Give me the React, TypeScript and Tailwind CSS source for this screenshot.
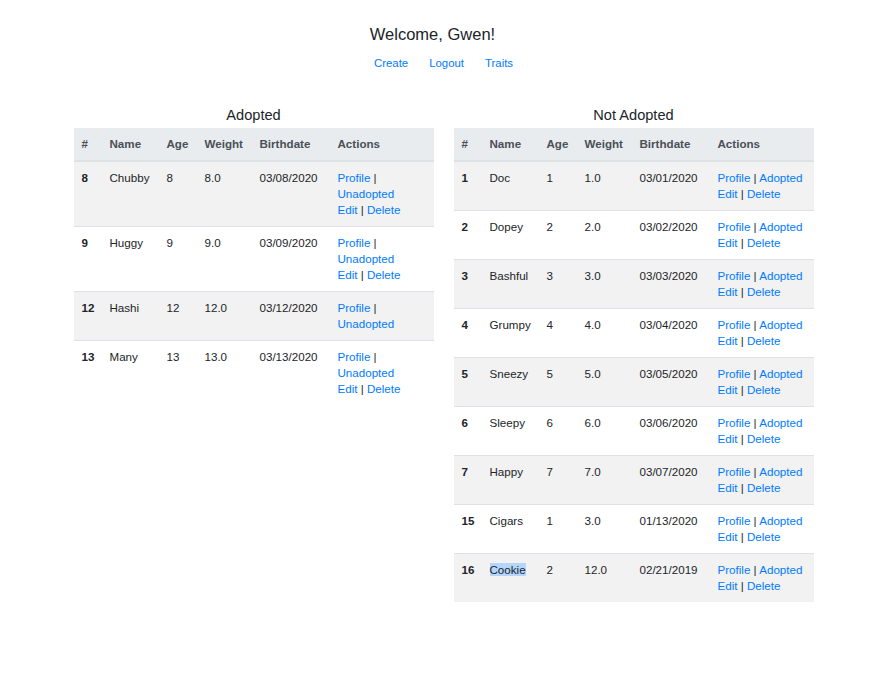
import React from "react";

type Pet = { id: number; name: string; age: number; weight: string; birth: string; canEdit: boolean; selected?: boolean };

const adopted: Pet[] = [
  { id: 8, name: "Chubby", age: 8, weight: "8.0", birth: "03/08/2020", canEdit: true },
  { id: 9, name: "Huggy", age: 9, weight: "9.0", birth: "03/09/2020", canEdit: true },
  { id: 12, name: "Hashi", age: 12, weight: "12.0", birth: "03/12/2020", canEdit: false },
  { id: 13, name: "Many", age: 13, weight: "13.0", birth: "03/13/2020", canEdit: true },
];

const notAdopted: Pet[] = [
  { id: 1, name: "Doc", age: 1, weight: "1.0", birth: "03/01/2020", canEdit: true },
  { id: 2, name: "Dopey", age: 2, weight: "2.0", birth: "03/02/2020", canEdit: true },
  { id: 3, name: "Bashful", age: 3, weight: "3.0", birth: "03/03/2020", canEdit: true },
  { id: 4, name: "Grumpy", age: 4, weight: "4.0", birth: "03/04/2020", canEdit: true },
  { id: 5, name: "Sneezy", age: 5, weight: "5.0", birth: "03/05/2020", canEdit: true },
  { id: 6, name: "Sleepy", age: 6, weight: "6.0", birth: "03/06/2020", canEdit: true },
  { id: 7, name: "Happy", age: 7, weight: "7.0", birth: "03/07/2020", canEdit: true },
  { id: 15, name: "Cigars", age: 1, weight: "3.0", birth: "01/13/2020", canEdit: true },
  { id: 16, name: "Cookie", age: 2, weight: "12.0", birth: "02/21/2019", canEdit: true, selected: true },
];

const A = ({ children }: { children: React.ReactNode }) => (
  <a href="#" className="text-[#007bff]">{children}</a>
);

function PetTable({ title, pets, isAdopted }: { title: string; pets: Pet[]; isAdopted: boolean }) {
  return (
    <div className="flex-1">
      <h2 className="text-center text-[14.6px] leading-[20px] text-[#212529] mb-[3px]">{title}</h2>
      <table className="w-full table-fixed border-collapse text-[11.6px] leading-[16px] text-[#212529]">
        <colgroup>
          <col className="w-[28px]" />
          <col className="w-[57px]" />
          <col className="w-[38px]" />
          <col className="w-[55px]" />
          <col className="w-[78px]" />
          <col className="w-[104px]" />
        </colgroup>
        <thead>
          <tr className="bg-[#e9ecef] text-[#495057] border-b-2 border-[#dee2e6]">
            {["#", "Name", "Age", "Weight", "Birthdate", "Actions"].map((h) => (
              <th key={h} className="text-left font-bold p-2">{h}</th>
            ))}
          </tr>
        </thead>
        <tbody>
          {pets.map((p, i) => (
            <tr key={p.id} className={`border-t border-[#dee2e6] align-top ${i % 2 === 0 ? "bg-[#f2f2f2]" : ""}`}>
              <th className="text-left font-bold p-2">{p.id}</th>
              <td className="p-2">
                {p.selected ? <span className="bg-[#b4d5fe]">{p.name}</span> : p.name}
              </td>
              <td className="p-2">{p.age}</td>
              <td className="p-2">{p.weight}</td>
              <td className="p-2">{p.birth}</td>
              <td className="p-2 whitespace-nowrap">
                {isAdopted ? (
                  <>
                    <div><A>Profile</A> |</div>
                    <div><A>Unadopted</A></div>
                  </>
                ) : (
                  <div><A>Profile</A> | <A>Adopted</A></div>
                )}
                {p.canEdit && (
                  <div><A>Edit</A> | <A>Delete</A></div>
                )}
              </td>
            </tr>
          ))}
        </tbody>
      </table>
    </div>
  );
}

export default function App() {
  return (
    <div className="min-h-[697px] bg-white font-['Liberation_Sans',Arial,sans-serif]">
      <div className="w-[887px]">
        <div className="pt-[24px] flex flex-col items-center">
          <h1 className="text-[16.5px] leading-[20px] text-[#212529] mr-[22px]">Welcome, Gwen!</h1>
          <nav className="mt-[11px] flex text-[11.4px] leading-[16px]">
            <a href="#" className="px-[10.5px] text-[#007bff]">Create</a>
            <a href="#" className="px-[10.5px] text-[#007bff]">Logout</a>
            <a href="#" className="px-[10.5px] text-[#007bff]">Traits</a>
          </nav>
        </div>
        <div className="w-[740px] mx-auto mt-[34px] flex gap-[20px] items-start">
          <PetTable title="Adopted" pets={adopted} isAdopted />
          <PetTable title="Not Adopted" pets={notAdopted} isAdopted={false} />
        </div>
      </div>
    </div>
  );
}
